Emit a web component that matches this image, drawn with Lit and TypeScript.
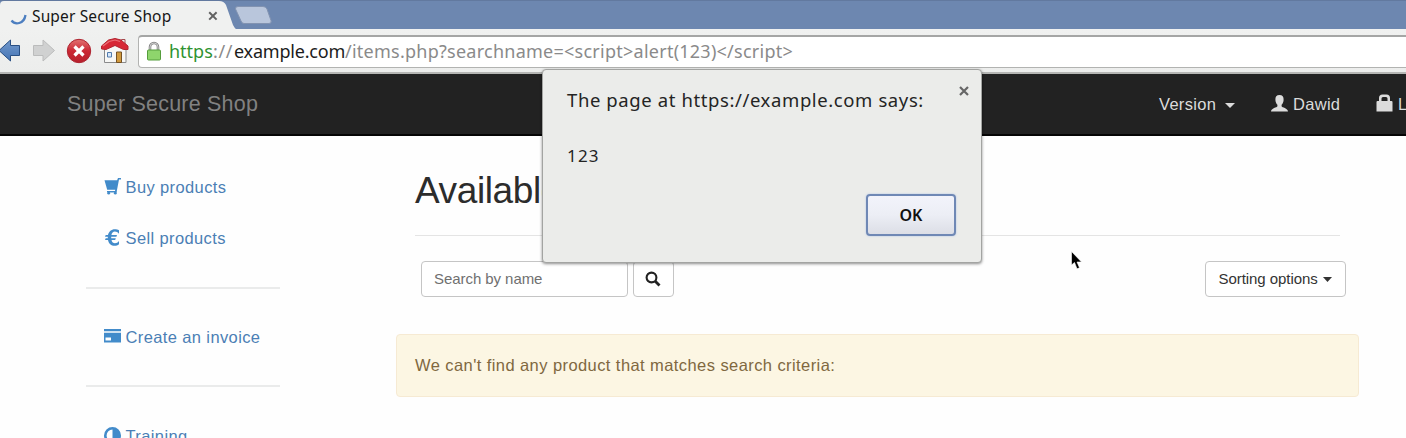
import { LitElement, html, css, svg } from "lit";
import { customElement } from "lit/decorators.js";

const cart = svg`<path d="M.5 2.200h12.600L14 0h3v1.400h-2L12.800 13v1.500H3V13h8l.2-1.300H3.200z"/><circle cx="4.700" cy="15.200" r="1.400"/><circle cx="11.300" cy="15.200" r="1.400"/>`;
const euro = svg`<path d="M15 1.300v3.500C13.800 3.300 12.400 2.500 10.900 2.500 9 2.500 7.900 3.700 7.400 6H13l-.6 1.700H7.200v1.600h4.600l-.6 1.700H7.500c.5 2.200 1.700 3.300 3.500 3.300 1.500 0 2.800-.8 4-2.200v3.200c-1.300 1-2.700 1.500-4.300 1.500-3.600 0-6-2.200-6.700-5.800H1l.7-1.700h2.100V7.700H1L1.700 6H4C4.800 2.400 7.300.2 10.800.2c1.600 0 3 .3 4.200 1.100z"/>`;
const card = svg`<path d="M0 1h17v2.200H0zM0 4.800h17v9.700H0zM1.500 9.500v3h5.500v-3z" fill-rule="evenodd"/>`;
const contrast = svg`<path d="M8.500 0a8.500 8.500 0 1 0 0 17 8.500 8.500 0 0 0 0-17zm0 2.600v11.800a5.900 5.900 0 0 1 0-11.800z" fill-rule="evenodd"/>`;

@customElement("app-root")
export class AppRoot extends LitElement {
  static styles = css`
    :host { display: block; position: relative; width: 1406px; height: 438px; overflow: hidden; background: #fefefe; font-family: "Liberation Sans", Arial, sans-serif; font-size: 16px; }
    * { box-sizing: border-box; }
    svg { display: block; flex: none; }
    span { white-space: pre; }
    .ui { font-family: "Noto Sans", "Open Sans", sans-serif; }
    .tabs { height: 29px; background: #6d87b0; border-top: 1px solid #62799f; display: flex; }
    .tab { width: 237px; height: 29px; flex: none; display: grid; }
    .tab > * { grid-area: 1 / 1; }
    .tabrow { display: flex; align-items: center; padding: 0 0 0 10px; height: 29px; color: #161616; font-size: 15.500px; }
    .spinner { margin-top: 6px; }
    .tabtitle { margin-left: 5px; width: 176px; letter-spacing: .14px; }
    .newtab { margin-top: 4px; margin-left: -3px; }
    .toolbar { height: 45px; background: linear-gradient(#f0f1f0, #ecedec); border-bottom: 2px solid #b5b6b4; display: flex; align-items: flex-start; padding-top: 6px; }
    .nav { width: 138px; height: 34px; flex: none; }
    .address { flex: 1; height: 33px; margin-right: -8px; background: #fff; border: 1px solid #b2b3b1; border-top: 2px solid #a5a6a5; border-radius: 4px; display: flex; align-items: center; padding: 0 0 3px 7px; font-size: 18px; color: #8a8a8a; }
    .lock { margin-right: 7px; }
    .scheme { color: #2f9331; width: 44px; }
    .sep { width: 21px; letter-spacing: .6px; }
    .host { color: #1c1c1c; width: 111px; letter-spacing: -.2px; }
    .path { letter-spacing: .25px; }
    .navbar { height: 62px; background: #222; border-bottom: 2px solid #050505; display: flex; align-items: center; color: #dcdcdc; padding-left: 67px; }
    .brand { color: #818181; font-size: 21.500px; letter-spacing: .2px; width: 1092px; flex: none; }
    .menu { display: flex; align-items: center; flex: none; padding-top: 1px; }
    .version { width: 58px; }
    .caret { margin-left: 8px; margin-right: 36px; margin-top: 1px; }
    .user { margin-right: 5px; margin-top: -2px; }
    .dawid { width: 83px; }
    .version, .dawid { font-size: 16.500px; letter-spacing: .3px; }
    .bag { margin-right: 5px; margin-top: -4px; }
    .body { display: flex; height: 302px; }
    .side { width: 280px; padding-left: 86px; flex: none; }
    .item { display: flex; align-items: center; height: 51px; padding-left: 18px; color: #4b7fb5; letter-spacing: .38px; font-size: 16.500px; }
    .item svg { fill: #428bca; margin-right: 4.500px; margin-top: -3px; }
    .group { border-bottom: 2px solid #eaebeb; height: 153px; padding-top: 26px; }
    .group2 { border-bottom: 2px solid #eaebeb; height: 98px; padding-top: 23px; }
    .group3 { padding-top: 24px; }
    .main { width: 963px; margin-left: 116px; flex: none; }
    .title { height: 100px; margin: 0 19px; border-bottom: 1px solid #e4e4e4; color: #2c2c2c; font-size: 37px; line-height: 42px; padding-top: 34px; letter-spacing: -.4px; }
    .controls { display: flex; padding: 25px 13.500px 0 25px; height: 98px; font-size: 15px; letter-spacing: -.06px; }
    .field, .btn { height: 36px; border: 1px solid #c5c5c5; border-radius: 4px; background: #fff; display: flex; align-items: center; }
    .field { width: 207px; padding-left: 12px; color: #707070; }
    .find { width: 41px; margin-left: 5px; padding-right: 1px; justify-content: center; }
    .sort { width: 141px; margin-left: auto; padding-left: 13px; color: #333; gap: 5px; }
    .field span, .sort span { margin-top: -2px; }
    .alert { height: 63px; background: #fcf6e3; border: 1px solid #f6ead3; border-radius: 4px; color: #80683f; display: flex; align-items: center; padding-left: 18px; font-size: 16.500px; letter-spacing: .42px; }
    .dialog { position: absolute; left: 542px; top: 69px; width: 440px; height: 194px; background: #ebecea; border: 1px solid #a3a4a2; border-radius: 4px; box-shadow: 0 1px 3px rgba(0,0,0,.45); color: #242424; padding: 17px 10px 0 24px; }
    .head { display: flex; justify-content: space-between; height: 56px; line-height: 26px; font-size: 18.500px; }
    .says { letter-spacing: .6px; }
    .close { margin-top: -9px; }
    .msg { line-height: 25px; font-size: 17px; height: 51px; letter-spacing: 1.200px; }
    .ok { width: 90px; height: 42px; margin-left: 299px; border: 2px solid #6f88b5; border-radius: 4px; background: linear-gradient(#f2f3fb, #eceef5 50%, #dcdee6); display: flex; align-items: center; justify-content: center; font-size: 16px; font-weight: 600; color: #111; box-shadow: 0 0 2px #a9bfe8; }
    .cursor { position: absolute; left: 1070px; top: 250px; }
  `;

  render() {
    const item = (icon: unknown, text: string) =>
      html`<div class="item"><svg width="17" height="17" viewBox="0 0 17 17">${icon}</svg><span>${text}</span></div>`;
    const cross = html`<svg class="close" width="13" height="26" viewBox="0 0 13 26"><path d="M2 9l8 8M10 9l-8 8" stroke="#666" stroke-width="2.200"/></svg>`;
    return html`
      <div class="tabs ui">
        <div class="tab">
          <svg width="237" height="29"><path d="M0 29V4Q0 0 4 0H219Q224 0 226 4L233 24Q235 28 237 29Z" fill="#f0f1f0"/></svg>
          <div class="tabrow">
            <svg class="spinner" width="17" height="14" viewBox="0 0 17 14"><path d="M1.500 8.500C5 13 14 12.500 15.500 3" fill="none" stroke="#4d7fc0" stroke-width="2.300"/></svg>
            <span class="tabtitle">Super Secure Shop</span>
            <svg width="10" height="10"><path d="M1.200 1.200l7.400 7.400M8.600 1.200l-7.400 7.400" stroke="#626262" stroke-width="2"/></svg>
          </div>
        </div>
        <svg class="newtab" width="40" height="20"><path d="M4 1.500H29Q32 1.500 33 4L37 15.500Q38 18.500 35 18.500H10Q8 18.500 7 16L1.500 4Q1 1.500 4 1.500Z" fill="#b9c6dc" stroke="#8293b1"/></svg>
      </div>
      <div class="toolbar">
        <svg class="nav" viewBox="0 0 138 34">
          <defs>
            <linearGradient id="b" x2="0" y2="1"><stop stop-color="#7399cb"/><stop offset="1" stop-color="#4474b5"/></linearGradient>
            <linearGradient id="r" x2="0" y2="1"><stop stop-color="#e27272"/><stop offset=".5" stop-color="#cb2733"/><stop offset="1" stop-color="#b7202c"/></linearGradient>
          </defs>
          <path d="M-1 15.500L10.500 5V10.500H19.500V20.500H10.500V26Z" fill="url(#b)" stroke="#294f83"/>
          <path d="M54.500 15.500L43 5V10.500H33.500V20.500H43V26Z" fill="#d0d1d1" stroke="#bbbcbc"/>
          <circle cx="79" cy="16" r="11.700" fill="url(#r)" stroke="#ad2430"/>
          <path d="M74.500 11.500l9 9M83.500 11.500l-9 9" stroke="#fff" stroke-width="3.200"/>
          <path d="M104.500 13.500L115 10L126 13.500V27.500H104.500Z" fill="#f7f7f5" stroke="#8a8b8c"/>
          <path d="M121.500 4.500h3.500v7h-3.500z" fill="#f2eeee" stroke="#a4484c"/>
          <path d="M101.500 14V11L108.500 5L115 3.500L121 5L128 11V14.500H123.500L115 10.500L106 14.500Z" fill="#d72735" stroke="#b22430"/>
          <path d="M103 11L109 6.500L115 5L120 6.500" fill="none" stroke="#ec6f76" stroke-width="1.200"/>
          <path d="M107.500 17.500h4v4.500h-4z" fill="#d7e8fa" stroke="#527cae"/>
          <path d="M116.500 17h5v10.500h-5z" fill="#d19a3d" stroke="#765224"/>
        </svg>
        <div class="address ui">
          <svg class="lock" width="16" height="20" viewBox="0 0 16 20"><path d="M4 10V6a4 4 0 0 1 8 0v4" fill="none" stroke="#858585" stroke-width="2.600"/><path d="M4 10V6a4 4 0 0 1 8 0v4" fill="none" stroke="#ddd" stroke-width=".8"/><rect x="1.500" y="9" width="13" height="10" rx="1" fill="#8ed56c" stroke="#559d3c"/></svg>
          <span class="scheme">https</span><span class="sep">://</span><span class="host">example.com</span><span class="path">/items.php?searchname=&lt;script&gt;alert(123)&lt;/script&gt;</span>
        </div>
      </div>
      <div class="navbar">
        <span class="brand">Super Secure Shop</span>
        <div class="menu">
          <span class="version">Version</span>
          <svg class="caret" width="10" height="5"><path d="M0 0h10L5 5z" fill="#dcdcdc"/></svg>
          <svg class="user" width="17" height="17" viewBox="0 0 17 17"><path d="M8.500 0C5.500 0 4.200 1.800 4.400 5c.1 2.200 1 3.900 2 4.700v1.500C6 12.500.2 13 0 16.500h17c-.2-3.500-6-4-6.400-5.300V9.700c1-.8 1.900-2.500 2-4.700.2-3.200-1.200-5-4.100-5z" fill="#dcdcdc"/></svg>
          <span class="dawid">Dawid</span>
          <svg class="bag" width="17" height="18" viewBox="0 0 17 18"><path d="M.5 8Q.5 7 1.500 7H3V4Q3 .5 6.500.5h4Q14 .5 14 4v3h1.500q1 0 1 1v9.500H.5zM5.500 7h6V4.500Q11.500 3 10 3H7Q5.500 3 5.500 4.500z" fill="#dcdcdc" fill-rule="evenodd"/></svg>
          <span>L</span>
        </div>
      </div>
      <div class="body">
        <div class="side">
          <div class="group">${item(cart, "Buy products")}${item(euro, "Sell products")}</div>
          <div class="group2">${item(card, "Create an invoice")}</div>
          <div class="group3">${item(contrast, "Training")}</div>
        </div>
        <div class="main">
          <div class="title">Available</div>
          <div class="controls">
            <div class="field"><span>Search by name</span></div>
            <div class="btn find"><svg width="16" height="16" viewBox="0 0 16 16"><circle cx="6.500" cy="6.500" r="4.900" fill="none" stroke="#222" stroke-width="2.100"/><path d="M10 10l4.500 4.500" stroke="#222" stroke-width="2.800"/></svg></div>
            <div class="btn sort"><span>Sorting options</span><svg width="9" height="5"><path d="M0 0h9L4.500 5z" fill="#333"/></svg></div>
          </div>
          <div class="alert"><span>We can't find any product that matches search criteria:</span></div>
        </div>
      </div>
      <div class="dialog ui">
        <div class="head"><span class="says">The page at https://example.com says:</span>${cross}</div>
        <div class="msg"><span class="num">123</span></div>
        <div class="ok">OK</div>
      </div>
      <svg class="cursor" width="14" height="21" viewBox="0 0 14 21"><path d="M1.500 1.500V15l3-2.500 2.500 6.300 2.500-1L7 12h4.500z" fill="#000" stroke="#fff" stroke-width=".6"/></svg>`;
  }
}
